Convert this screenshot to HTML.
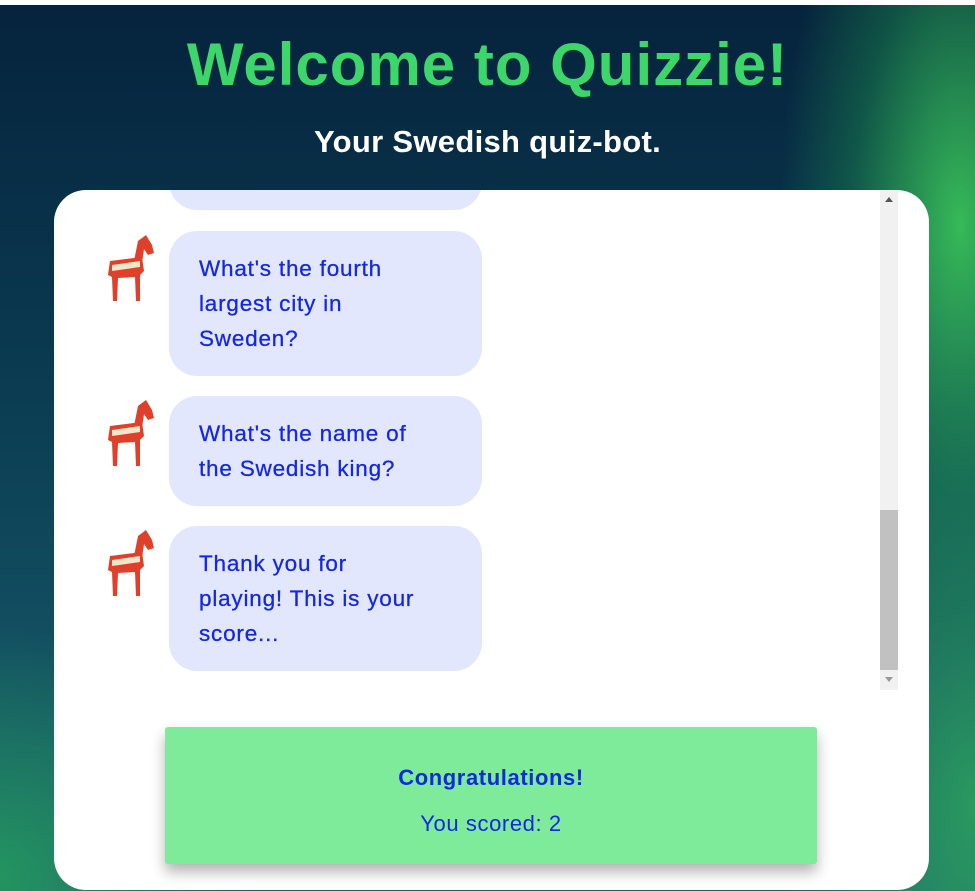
<!DOCTYPE html>
<html><head><style>
body{margin:0;width:975px;height:891px;overflow:hidden;font-family:"Liberation Sans",sans-serif;background:#fff;}
.bg{position:absolute;left:0;top:5px;width:975px;height:886px;
background:radial-gradient(ellipse 180px 450px at 960px 220px,rgba(60,200,90,.9),rgba(30,150,80,.4) 60%,transparent 100%),
radial-gradient(ellipse 250px 250px at 0px 870px,rgba(40,170,90,.7),transparent),
radial-gradient(ellipse 200px 400px at 975px 800px,rgba(50,180,90,.7),transparent),
linear-gradient(180deg,#06233d 0%,#0a3a50 40%,#1a6070 100%);}
h1{position:absolute;top:30px;left:0;width:975px;text-align:center;margin:0;font-size:60px;color:#3dd66b;font-weight:bold;letter-spacing:1px}
h2{position:absolute;top:124px;left:0;width:975px;text-align:center;margin:0;font-size:31px;color:#fff;font-weight:bold;letter-spacing:0.3px}
.card{position:absolute;left:54px;top:190px;width:875px;height:700px;background:#fff;border-radius:32px;overflow:hidden}
.bub{position:absolute;left:115px;width:313px;background:#e3e7fe;border-radius:28px;color:#1428e0;font-size:22.5px;letter-spacing:0.8px;line-height:35px;box-sizing:border-box;padding:20px 30px;white-space:nowrap;-webkit-text-stroke:0.3px #1428e0}
.av{position:absolute;left:36px;width:68px;height:72px}
.sb{position:absolute;left:826px;top:0;width:18px;height:500px;background:#f1f1f1}
.th{position:absolute;left:826px;top:320px;width:18px;height:160px;background:#c1c1c1}
.score{position:absolute;left:111px;top:537px;width:652px;height:137px;background:#7deb9a;border-radius:3px;box-shadow:0 8px 14px rgba(0,0,0,.3);text-align:center;color:#1428e0;letter-spacing:0.6px}
</style></head><body>
<div class="bg"></div>
<h1>Welcome to Quizzie!</h1>
<h2>Your Swedish quiz-bot.</h2>
<div class="card">
<div class="bub" style="top:-40px;height:60px"></div>
<svg class="av" style="top:41px" viewBox="0 0 68 72"><g fill="#e0402a"><path d="M20 30 L52 26 L54 40 L50 44 L50 70 L46 70 L45 46 L28 47 L27 70 L23 70 L22 46 L18 44 Z"/><path d="M44 30 L48 10 L56 4 L62 14 L64 22 L58 24 L54 18 L52 32 Z"/></g><path d="M22 34 L50 30 L50 36 L22 40 Z" fill="#f2e6c8"/></svg>
<div class="bub" style="top:41px">What's the fourth<br>largest city in<br>Sweden?</div>
<svg class="av" style="top:206px" viewBox="0 0 68 72"><g fill="#e0402a"><path d="M20 30 L52 26 L54 40 L50 44 L50 70 L46 70 L45 46 L28 47 L27 70 L23 70 L22 46 L18 44 Z"/><path d="M44 30 L48 10 L56 4 L62 14 L64 22 L58 24 L54 18 L52 32 Z"/></g><path d="M22 34 L50 30 L50 36 L22 40 Z" fill="#f2e6c8"/></svg>
<div class="bub" style="top:206px">What's the name of<br>the Swedish king?</div>
<svg class="av" style="top:336px" viewBox="0 0 68 72"><g fill="#e0402a"><path d="M20 30 L52 26 L54 40 L50 44 L50 70 L46 70 L45 46 L28 47 L27 70 L23 70 L22 46 L18 44 Z"/><path d="M44 30 L48 10 L56 4 L62 14 L64 22 L58 24 L54 18 L52 32 Z"/></g><path d="M22 34 L50 30 L50 36 L22 40 Z" fill="#f2e6c8"/></svg>
<div class="bub" style="top:336px">Thank you for<br>playing! This is your<br>score...</div>
<div class="sb"></div><div class="th"></div>
<div style="position:absolute;left:831px;top:7px;border:4px solid transparent;border-bottom:5px solid #555;border-top:0"></div>
<div style="position:absolute;left:831px;top:487px;border:4px solid transparent;border-top:5px solid #999;border-bottom:0"></div>
<div class="score"><div style="font-weight:bold;font-size:22px;margin-top:38px">Congratulations!</div><div style="font-size:22px;margin-top:20px">You scored: 2</div></div>
</div>
</body></html>
